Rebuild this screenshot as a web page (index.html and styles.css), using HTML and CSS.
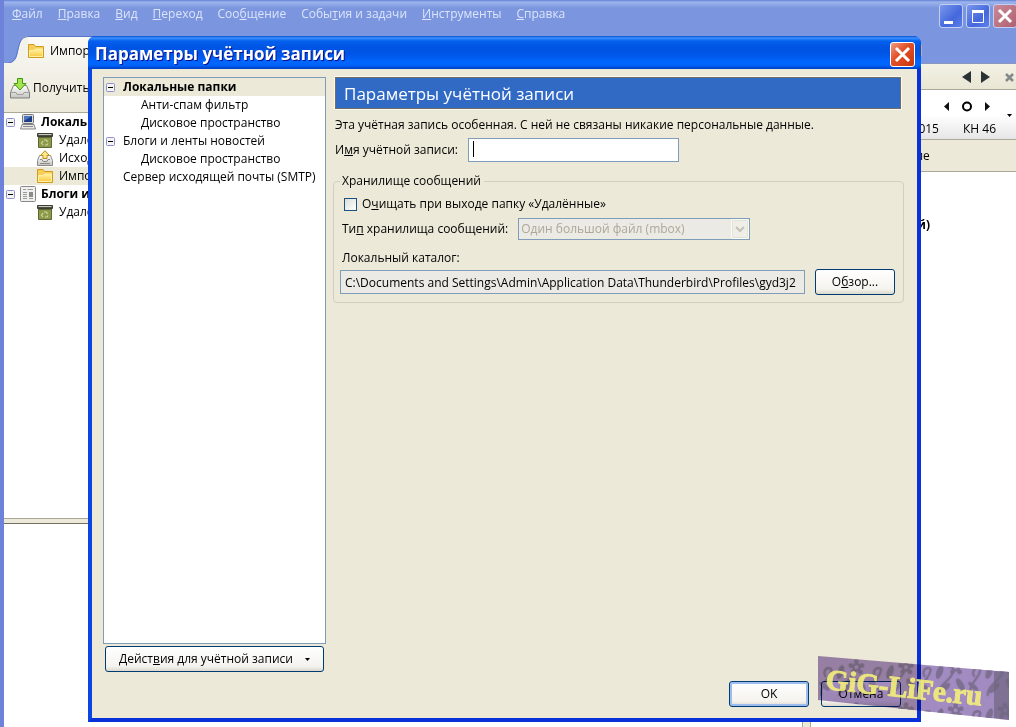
FILE: index.html
```html
<!DOCTYPE html>
<html lang="ru">
<head>
    <meta charset="UTF-8">
    <meta name="viewport" content="width=device-width, initial-scale=1.0">
    <title>Параметры учётной записи</title>
    <link rel="stylesheet" href="styles.css">
</head>
<body>
    <!-- shared icons -->
    <svg class="sprite" aria-hidden="true">
        <defs>
            <linearGradient id="g-folder" x1="0" y1="0" x2="0" y2="1">
                <stop offset="0" stop-color="#fff3a0"/>
                <stop offset="1" stop-color="#fbc944"/>
            </linearGradient>
            <linearGradient id="g-tray" x1="0" y1="0" x2="0" y2="1">
                <stop offset="0" stop-color="#ffffff"/>
                <stop offset="1" stop-color="#c4c4c0"/>
            </linearGradient>
        </defs>
        <symbol id="i-folder" viewBox="0 0 16 16">
            <path d="M.5 14.500V1.500h5.500l1.500 2h8v11z" fill="#f8cf56" stroke="#d39b1c"/>
            <path d="M1.500 13.500v-6h4.500l1.500-1.500h7v7.500z" fill="url(#g-folder)" stroke="#fff0a5"/>
        </symbol>
        <symbol id="i-trash" viewBox="0 0 16 16">
            <path d="M1.500 4.500h13v11h-13z" fill="#8d9a4a" stroke="#5c6733"/>
            <path d="M.5 1.500h15v3H.5z" fill="#4a4f42" stroke="#3b4030"/>
            <path d="M1.500 2.500h13" stroke="#c9cbc2"/>
            <path d="M2 5.500h12" stroke="#5c6733"/>
            <path d="M6 13l-1.500-2 1.500-2M7 8h2.500l1 2M11 11.500L10 13H8" fill="none" stroke="#cfd8a0" stroke-width="1.200"/>
        </symbol>
        <symbol id="i-outbox" viewBox="0 0 16 16">
            <path d="M2.500 5.500h11l2 5v5H.5v-5z" fill="url(#g-tray)" stroke="#8b8b88"/>
            <path d="M3 9.500h2l1 2h4l1-2h2M3 13.500h10" fill="none" stroke="#8b8b88"/>
            <path d="M8 .7l4.500 4.800h-2.500v3H6v-3H3.500z" fill="#ffe98a" stroke="#b98d16"/>
        </symbol>
        <symbol id="i-computer" viewBox="0 0 16 16">
            <rect x="2.500" y=".5" width="11" height="9" rx="1" fill="#dcdcd8" stroke="#77777a"/>
            <rect x="4" y="2" width="8" height="6" fill="#1d3d86"/>
            <path d="M4 2h8L4 7z" fill="#4f77bf"/>
            <path d="M2 10.500h12l1.500 4.500H.5z" fill="#e8e8e4" stroke="#85858a"/>
            <path d="M3 12.500h10" stroke="#8d8d8d"/>
        </symbol>
        <symbol id="i-news" viewBox="0 0 16 16">
            <rect x=".5" y=".5" width="15" height="15" rx="1" fill="#f0f0ee" stroke="#888"/>
            <path d="M3 3.500h3m1.500 0h5.500M3 6.500h4M3 8.500h4M3 10.500h4M3 12.500h4M9 12.500h4" stroke="#9a9a9a"/>
            <rect x="9" y="6" width="4" height="5" fill="#8b8b8b"/>
        </symbol>
        <symbol id="i-minus" viewBox="0 0 9 9">
            <rect x=".5" y=".5" width="8" height="8" rx="1" fill="#f5f4ee" stroke="#8c8fd4"/>
            <path d="M2 4.500h5" stroke="#000"/>
        </symbol>
    </svg>

    <div class="window">
        <header class="window-head">
            <nav class="menu">
                <a href="#"><u>Ф</u>айл</a>
                <a href="#"><u>П</u>равка</a>
                <a href="#"><u>В</u>ид</a>
                <a href="#"><u>П</u>ереход</a>
                <a href="#">Соо<u>б</u>щение</a>
                <a href="#">Собы<u>т</u>ия и задачи</a>
                <a href="#"><u>И</u>нструменты</a>
                <a href="#"><u>С</u>правка</a>
            </nav>
            <div class="window-buttons">
                <button class="win-btn" aria-label="Свернуть">
                    <svg width="22" height="22"><path d="M4 17.500h9" stroke="#fff" stroke-width="3"/></svg>
                </button>
                <button class="win-btn" aria-label="Развернуть">
                    <svg width="22" height="22"><path d="M5.500 6v11.500h11V6" fill="none" stroke="#fff"/><path d="M5 6.500h12" stroke="#fff" stroke-width="3"/></svg>
                </button>
                <button class="win-btn win-close" aria-label="Закрыть">
                    <svg width="22" height="22"><path d="M5 5l12 12M17 5L5 17" stroke="#fff" stroke-width="3"/></svg>
                </button>
            </div>
        </header>

        <div class="tabs">
            <svg class="tab-curve" width="26" height="28" viewBox="0 0 26 28">
                <path d="M0 28C13 28 13 20 15 11 17 3 19 0 26 0V28z" fill="#f4f3eb"/>
                <path d="M0 27.500C13 27.500 12 20 14.500 11 16.500 3 19 .5 26 .5" fill="none" stroke="#5877c8"/>
            </svg>
            <div class="tab">
                <svg class="icon"><use href="#i-folder"/></svg>
                <span>Импорт</span>
            </div>
            <span class="tab-tool"></span>
        </div>

        <div class="workspace">
            <main class="mail">
                <div class="toolbar">
                    <button class="tool">
                        <svg width="22" height="22" viewBox="0 0 22 22">
                            <path d="M4.500 8.500h13l3 7v5.500h-19v-5.500z" fill="url(#g-tray)" stroke="#80807c"/>
                            <path d="M2 15.500h5l1 2h6l1-2h5" fill="none" stroke="#a0a09c"/>
                            <path d="M8.500 1.500h5v5h3.500l-6 6.500-6-6.500h3.500z" fill="#a5e44d" stroke="#3c9717"/>
                        </svg>
                        <span>Получить</span>
                    </button>
                </div>
                <div class="folder-column">
                    <ul class="folders">
                        <li class="account"><svg class="minus"><use href="#i-minus"/></svg><svg class="icon"><use href="#i-computer"/></svg><span>Локальные</span></li>
                        <li><svg class="icon"><use href="#i-trash"/></svg><span>Удалённые</span></li>
                        <li><svg class="icon"><use href="#i-outbox"/></svg><span>Исходящие</span></li>
                        <li class="current"><svg class="icon"><use href="#i-folder"/></svg><span>Импорт</span></li>
                        <li class="account"><svg class="minus"><use href="#i-minus"/></svg><svg class="icon"><use href="#i-news"/></svg><span>Блоги и ленты</span></li>
                        <li><svg class="icon"><use href="#i-trash"/></svg><span>Удалённые</span></li>
                    </ul>
                    <div class="splitter"></div>
                    <div class="message"></div>
                </div>
            </main>
            <div class="side-splitter"></div>
            <aside class="today">
                <div class="today-head">
                    <svg width="52" height="14" viewBox="0 0 52 14">
                        <path d="M9 1v12L0 7zM19 1l9 6-9 6z" fill="#2b3236"/>
                        <path d="M44 4l7 7M51 4l-7 7" stroke="#83898b" stroke-width="2.500"/>
                    </svg>
                </div>
                <div class="today-date">
                    <div class="today-nav">
                        <svg width="46" height="12" viewBox="0 0 46 12">
                            <path d="M5 2v9L0 6.500zM41 2v9l5-4.500z" fill="#111"/>
                            <circle cx="23" cy="6.500" r="4" fill="none" stroke="#000" stroke-width="2"/>
                        </svg>
                        <svg class="drop" width="5" height="3"><path d="M0 0h5L2.500 3z"/></svg>
                    </div>
                    <div class="today-week"><span>2015</span><span>КН 46</span></div>
                </div>
                <div class="today-col">Название</div>
                <div class="today-events"><b>(й)</b></div>
            </aside>
        </div>
    </div>

    <section class="dialog" role="dialog" aria-labelledby="dialog-title">
        <header class="dialog-head">
            <h1 id="dialog-title">Параметры учётной записи</h1>
            <button class="dialog-close" aria-label="Закрыть">
                <svg width="23" height="23"><path d="M5 5l13 13M18 5L5 18" stroke="#fff" stroke-width="3"/></svg>
            </button>
        </header>
        <div class="dialog-body">
            <div class="columns">
                <div class="accounts">
                    <ul class="tree">
                        <li class="selected"><svg class="minus"><use href="#i-minus"/></svg><b>Локальные папки</b></li>
                        <li class="sub">Анти-спам фильтр</li>
                        <li class="sub">Дисковое пространство</li>
                        <li><svg class="minus"><use href="#i-minus"/></svg><span>Блоги и ленты новостей</span></li>
                        <li class="sub">Дисковое пространство</li>
                        <li class="leaf">Сервер исходящей почты (SMTP)</li>
                    </ul>
                    <button class="btn actions"><span>Дейст<u>в</u>ия для учётной записи</span><svg width="5" height="3"><path d="M0 0h5L2.500 3z"/></svg></button>
                </div>
                <form class="settings">
                    <h2>Параметры учётной записи</h2>
                    <p>Эта учётная запись особенная. С ней не связаны никакие персональные данные.</p>
                    <div class="name-row">
                        <label for="account-name">И<u>м</u>я учётной записи:</label>
                        <div class="caret-box"><input type="text" id="account-name"></div>
                    </div>
                    <fieldset>
                        <legend>Хранилище сообщений</legend>
                        <div class="check-row">
                            <input type="checkbox" id="clean">
                            <label for="clean">О<u>ч</u>ищать при выходе папку «Удалённые»</label>
                        </div>
                        <div class="store-row">
                            <label for="store">Ти<u>п</u> хранилища сообщений:</label>
                            <div class="select">
                                <select id="store" disabled><option>Один большой файл (mbox)</option></select>
                                <svg width="18" height="20" viewBox="0 0 18 20">
                                    <rect x=".5" y=".5" width="17" height="19" rx="1" fill="#f0efe7" stroke="#fbfbf8"/>
                                    <rect x="1.500" y="1.500" width="15" height="17" rx="1" fill="none" stroke="#e3e2d6"/>
                                    <path d="M5 8l4 4 4-4" fill="none" stroke="#c5c3b8" stroke-width="2"/>
                                </svg>
                            </div>
                        </div>
                        <label class="dir-label" for="dir">Локальный каталог:</label>
                        <div class="dir-row">
                            <input type="text" id="dir" readonly value="C:\Documents and Settings\Admin\Application Data\Thunderbird\Profiles\gyd3j2">
                            <button type="button" class="btn browse">О<u>б</u>зор...</button>
                        </div>
                    </fieldset>
                </form>
            </div>
            <footer class="dialog-foot">
                <button class="btn default">OK</button>
                <button class="btn">Отмена</button>
            </footer>
        </div>
    </section>

    <svg class="stamp" width="192" height="66" viewBox="0 0 192 66">
        <defs>
            <pattern id="floral" width="62" height="54" patternUnits="userSpaceOnUse" patternTransform="scale(.8)">
                <g fill="none" stroke="#7d6f92" stroke-width="3">
                    <path d="M4 50C2 32 16 30 17 16M17 16C8 12 6 22 10 26M26 50C26 36 38 34 44 22"/>
                    <circle cx="48" cy="14" r="4"/>
                </g>
                <g fill="#7d6f92">
                    <ellipse cx="8" cy="38" rx="8" ry="3" transform="rotate(40 8 38)"/>
                    <ellipse cx="34" cy="40" rx="9" ry="4" transform="rotate(-40 34 40)"/>
                    <ellipse cx="28" cy="20" rx="4" ry="9" transform="rotate(20 28 20)"/>
                    <ellipse cx="54" cy="36" rx="4" ry="9" transform="rotate(-30 54 36)"/>
                    <circle cx="48" cy="7" r="3"/>
                    <circle cx="55" cy="12" r="3"/>
                    <circle cx="41" cy="12" r="3"/>
                    <circle cx="44" cy="20" r="3"/>
                    <circle cx="53" cy="20" r="3"/>
                </g>
            </pattern>
        </defs>
        <path d="M0 0l191 16v48L0 44z" fill="#a28bc0"/>
        <path d="M0 0l191 16v48L0 44z" fill="url(#floral)"/>
        <path d="M176 15l15 1v48l-15-2z" fill="#6f6680" opacity=".7"/>
    </svg>
    <svg class="stamp-name" width="192" height="66" viewBox="0 0 192 66">
        <text x="7" y="33" transform="rotate(6 7 33)">GiG-LiFe.ru</text>
    </svg>
</body>
</html>
```

FILE: styles.css
```css
:root {
    --face: #ece9d8;
    --frame: #7b96df;
    --edge: #7f9db9;
    --select: #316ac5;
}

* {
    margin: 0;
    padding: 0;
    box-sizing: border-box;
}

body {
    font-family: 'Open Sans', 'DejaVu Sans Condensed', sans-serif;
    font-size: 12px;
    line-height: 18px;
    color: #000;
    overflow: hidden;
}

button,
input,
select {
    font: inherit;
    color: inherit;
}

ul {
    list-style: none;
}

svg {
    display: block;
    flex: none;
}

.sprite {
    position: absolute;
    width: 0;
    height: 0;
}

.icon {
    width: 16px;
    height: 16px;
}

.minus {
    width: 9px;
    height: 9px;
}

/* main window */
.window {
    display: flex;
    flex-direction: column;
    height: 100vh;
    overflow: hidden;
    border-left: 4px solid #6f82d9;
    background: linear-gradient(#5f7fd0, #9db5ee 2px, var(--frame) 8px);
}

.window-head {
    display: flex;
    justify-content: space-between;
    height: 36px;
}

.menu {
    display: flex;
    gap: 15px;
    padding: 5px 8px;
}

.menu a {
    color: #dbe4fb;
    text-decoration: none;
    white-space: nowrap;
}

.window-buttons {
    display: flex;
    gap: 3px;
    padding-top: 4px;
    margin-right: -1px;
}

.win-btn {
    width: 24px;
    height: 24px;
    border: 1px solid #c3d0f4;
    border-radius: 3px;
    background: linear-gradient(135deg, #7b97ec, #4468dc 60%, #5c80ea);
}

.win-close {
    background: linear-gradient(135deg, #c98a99, #b0606f);
}

.tabs {
    display: flex;
    height: 27px;
}

.tab {
    display: flex;
    align-items: center;
    gap: 6px;
    width: 140px;
    height: 28px;
    margin-left: -2px;
    border-top: 1px solid #5877c8;
    background: linear-gradient(#fbfaf6, #f4f3eb);
}

.tab-tool {
    width: 22px;
    height: 13px;
    margin: 8px 94px 0 auto;
    border: 1px solid #d8a878;
    border-radius: 2px;
}

.workspace {
    display: flex;
    flex: 1;
    background: #fff;
}

.mail {
    display: flex;
    flex-direction: column;
    flex: 1;
}

.toolbar {
    display: flex;
    align-items: center;
    height: 50px;
    padding-left: 5px;
    border-bottom: 1px solid #aca899;
    background: linear-gradient(#f4f3eb, #ebe8d8);
}

.tool {
    display: flex;
    align-items: center;
    gap: 2px;
    border: 0;
    background: none;
}

.folder-column {
    display: flex;
    flex-direction: column;
    flex: 1;
    width: 180px;
}

.folders {
    flex: 2;
}

.folders li {
    display: flex;
    align-items: center;
    gap: 6px;
    height: 18px;
    padding-left: 33px;
    white-space: nowrap;
}

.folders .account {
    gap: 5px;
    padding-left: 2px;
    font-weight: bold;
}

.folders .current {
    background: var(--face);
}

.splitter {
    height: 6px;
    border-top: 1px solid #aca899;
    border-bottom: 1px solid #716f64;
    background: var(--face);
}

.message {
    flex: 1;
}

.side-splitter {
    width: 9px;
    border: 1px solid #aca899;
    border-width: 0 1px;
    background: var(--face);
}

.today {
    width: 205px;
}

.today-head {
    display: flex;
    align-items: center;
    justify-content: flex-end;
    height: 27px;
    padding-right: 2px;
    border-top: 1px solid #8a96c0;
    border-bottom: 1px solid #aca899;
    background: linear-gradient(#f3f1e4, #e9e6d4);
}

.today-date {
    height: 50px;
    border-bottom: 1px solid #aca899;
    background: linear-gradient(#fff 50%, #e6e6e6);
}

.today-nav {
    display: flex;
    justify-content: flex-end;
    gap: 17px;
    height: 30px;
    padding: 10px 4px 0 0;
}

.drop {
    margin-top: 14px;
}

.today-week {
    display: flex;
    justify-content: flex-end;
    gap: 24px;
    padding-right: 20px;
}

.today-col {
    height: 32px;
    padding: 7px 0 0 62px;
    border-bottom: 1px solid #aca899;
    background: var(--face);
}

.today-events {
    padding: 44px 86px 0 0;
    text-align: right;
}

/* dialog window */
.dialog {
    position: absolute;
    top: 36px;
    right: 95px;
    bottom: 5px;
    left: 88px;
    display: flex;
    flex-direction: column;
    border: 4px solid #0a46e0;
    border-top: 0;
    border-right-color: #0831d9;
    border-bottom-color: #0831d9;
    border-radius: 8px 8px 0 0;
    background: #0a46e0;
}

.dialog-head {
    display: flex;
    align-items: center;
    justify-content: space-between;
    height: 33px;
    margin: 0 -4px;
    padding: 3px 6px 0 7px;
    border-radius: 7px 7px 0 0;
    background: linear-gradient(#0a4fd0, #3a92ff 2px, #0560ee 5px, #0054e3 11px, #0055e6 18px, #0066ff 26px, #0065fb 29px, #003fc4);
}

.dialog-head h1 {
    font-size: 17px;
    line-height: 24px;
    color: #fff;
    text-shadow: 1px 1px #0f1089;
}

.dialog-close {
    width: 25px;
    height: 25px;
    border: 1px solid #fff;
    border-radius: 3px;
    background: linear-gradient(135deg, #f09d83, #e2532b 40%, #c9350c);
}

.dialog-body {
    display: flex;
    flex-direction: column;
    flex: 1;
    background: var(--face);
}

.columns {
    display: flex;
    flex: 1;
    gap: 7px;
    padding: 8px 13px 0 11px;
}

.accounts {
    display: flex;
    flex-direction: column;
    width: 223px;
}

.tree {
    flex: 1;
    border: 1px solid var(--edge);
    background: #fff;
}

.tree li {
    display: flex;
    align-items: center;
    gap: 8px;
    padding-left: 2px;
    white-space: nowrap;
}

.tree .selected {
    background: var(--face);
}

.tree .leaf {
    padding-left: 19px;
}

.tree .sub {
    padding-left: 37px;
}

.btn {
    width: 80px;
    height: 26px;
    border: 1px solid #003c74;
    border-radius: 3px;
    background: linear-gradient(#fff, #f4f3ee 80%, #dcd8cc);
}

.btn.default {
    box-shadow: inset 0 0 0 2px #9dbcf0;
}

.actions {
    display: flex;
    align-items: center;
    justify-content: center;
    gap: 12px;
    width: auto;
    margin: 2px 2px 0;
}

.settings {
    flex: 1;
}

.settings h2 {
    height: 32px;
    margin: 0 3px 0 2px;
    padding-left: 8px;
    border: 1px solid #716f64;
    outline: 1px solid #f8f7f0;
    background: var(--select);
    color: #fff;
    font-size: 17px;
    font-weight: normal;
    line-height: 31px;
}

.settings p {
    padding: 7px 2px 4px;
}

.name-row {
    display: flex;
    align-items: center;
    gap: 10px;
    padding-left: 2px;
}

.caret-box {
    position: relative;
    width: 211px;
}

.caret-box::after {
    content: "";
    position: absolute;
    top: 3px;
    left: 5px;
    width: 1px;
    height: 16px;
    background: #000;
}

.settings input[type="text"] {
    display: block;
    width: 100%;
    height: 24px;
    padding: 0 4px;
    border: 1px solid var(--edge);
    background: #fff;
}

fieldset {
    margin-top: 10px;
    padding: 5px 8px 7px 6px;
    border: 1px solid #d0d0bf;
    border-radius: 4px;
}

legend {
    padding: 0 3px 0 2px;
}

.check-row {
    display: flex;
    align-items: center;
    gap: 5px;
    padding-left: 4px;
}

.check-row input {
    appearance: none;
    width: 13px;
    height: 13px;
    border: 1px solid #1c5180;
    background: linear-gradient(135deg, #dcdcd7, #fff);
}

.store-row {
    display: flex;
    align-items: center;
    gap: 10px;
    padding: 5px 0 9px 2px;
}

.select {
    display: flex;
    align-items: center;
    width: 232px;
    height: 22px;
    border: 1px solid var(--edge);
    background: #ebeae4;
}

.select select {
    flex: 1;
    appearance: none;
    border: 0;
    background: none;
    padding-left: 2px;
    color: #aca899;
    opacity: 1;
}

.dir-label {
    display: block;
    padding-left: 2px;
}

.dir-row {
    display: flex;
    align-items: center;
    gap: 10px;
    padding-top: 2px;
}

.settings .dir-row input {
    flex: 1;
    background: #ebeae4;
}

.dialog-foot {
    display: flex;
    justify-content: flex-end;
    gap: 12px;
    padding: 9px 16px 11px;
}

/* site stamp */
.stamp,
.stamp-name {
    position: absolute;
    right: 6px;
    bottom: 5px;
}

.stamp {
    mix-blend-mode: multiply;
}

.stamp-name {
    opacity: .9;
}

.stamp-name text {
    font-family: 'Liberation Serif', serif;
    font-size: 29px;
    font-weight: bold;
    fill: #f5f07c;
    stroke: #f5f07c;
    stroke-width: 1;
}
```
